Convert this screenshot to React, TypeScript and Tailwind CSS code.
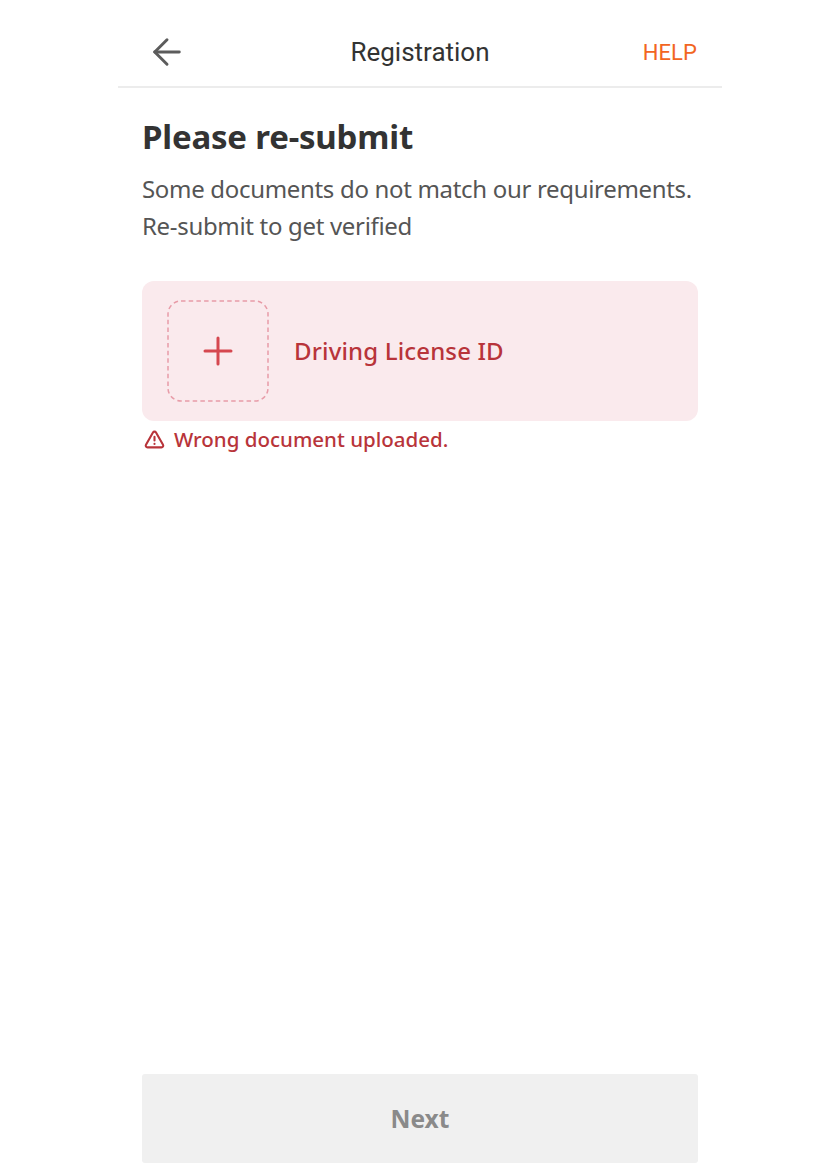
import { ArrowLeft, TriangleAlert } from "lucide-react";

export default function App() {
  return (
    <div className="min-h-[1176px] bg-white font-['Noto_Sans',sans-serif]">
      <div className="mx-auto flex h-[1176px] w-[604px] flex-col">
        <header className="grid h-[88px] shrink-0 grid-cols-[1fr_auto_1fr] items-center border-b-2 border-[#ececec] px-[25px] pt-[18px] font-['Roboto',sans-serif]">
          <ArrowLeft className="ml-[3px] h-[42px] w-[42px] text-[#5c5c5c]" strokeWidth={1.7} />
          <h2 className="text-[26px] leading-none text-[#333333]">Registration</h2>
          <button className="mt-[2px] justify-self-end text-[22px] leading-none tracking-[0.1px] text-[#f26522]">HELP</button>
        </header>

        <main className="flex flex-1 flex-col px-[24px]">
          <h1 className="mt-[26px] text-[33px] font-bold leading-[46px] tracking-[-0.2px] text-[#333333]">Please re-submit</h1>
          <p className="mt-[10px] whitespace-nowrap text-[24px] leading-[37px] tracking-[-0.32px] text-[#555555]">
            Some documents do not match our requirements.
            <br />
            Re-submit to get verified
          </p>

          <div className="mt-[37px] flex h-[140px] items-center gap-[25px] rounded-[12px] bg-[#faeaed] pl-[25px]">
            <svg className="h-[102px] w-[102px] shrink-0" viewBox="0 0 102 102" fill="none">
              <rect x="1" y="1" width="100" height="100" rx="13" stroke="#e89ca8" strokeWidth="1.5" strokeDasharray="4.5 3.2" />
              <path d="M38 51h26M51 38v26" stroke="#d5474f" strokeWidth="3" strokeLinecap="round" />
            </svg>
            <span className="text-[24px] font-medium tracking-[0.15px] text-[#b8343a]">Driving License ID</span>
          </div>

          <div className="mt-[4px] flex items-center gap-[9px] pl-[2px] text-[20.5px] font-medium leading-[29px] text-[#b8343a]">
            <TriangleAlert className="h-[21px] w-[21px]" strokeWidth={2.4} />
            <span>Wrong document uploaded.</span>
          </div>

          <button className="mb-[13px] mt-auto flex h-[89px] w-full items-center justify-center rounded-[3px] bg-[#f0f0f0] pt-[2px] text-[24.5px] font-bold text-[#8a8a8a]">
            Next
          </button>
        </main>
      </div>
    </div>
  );
}
